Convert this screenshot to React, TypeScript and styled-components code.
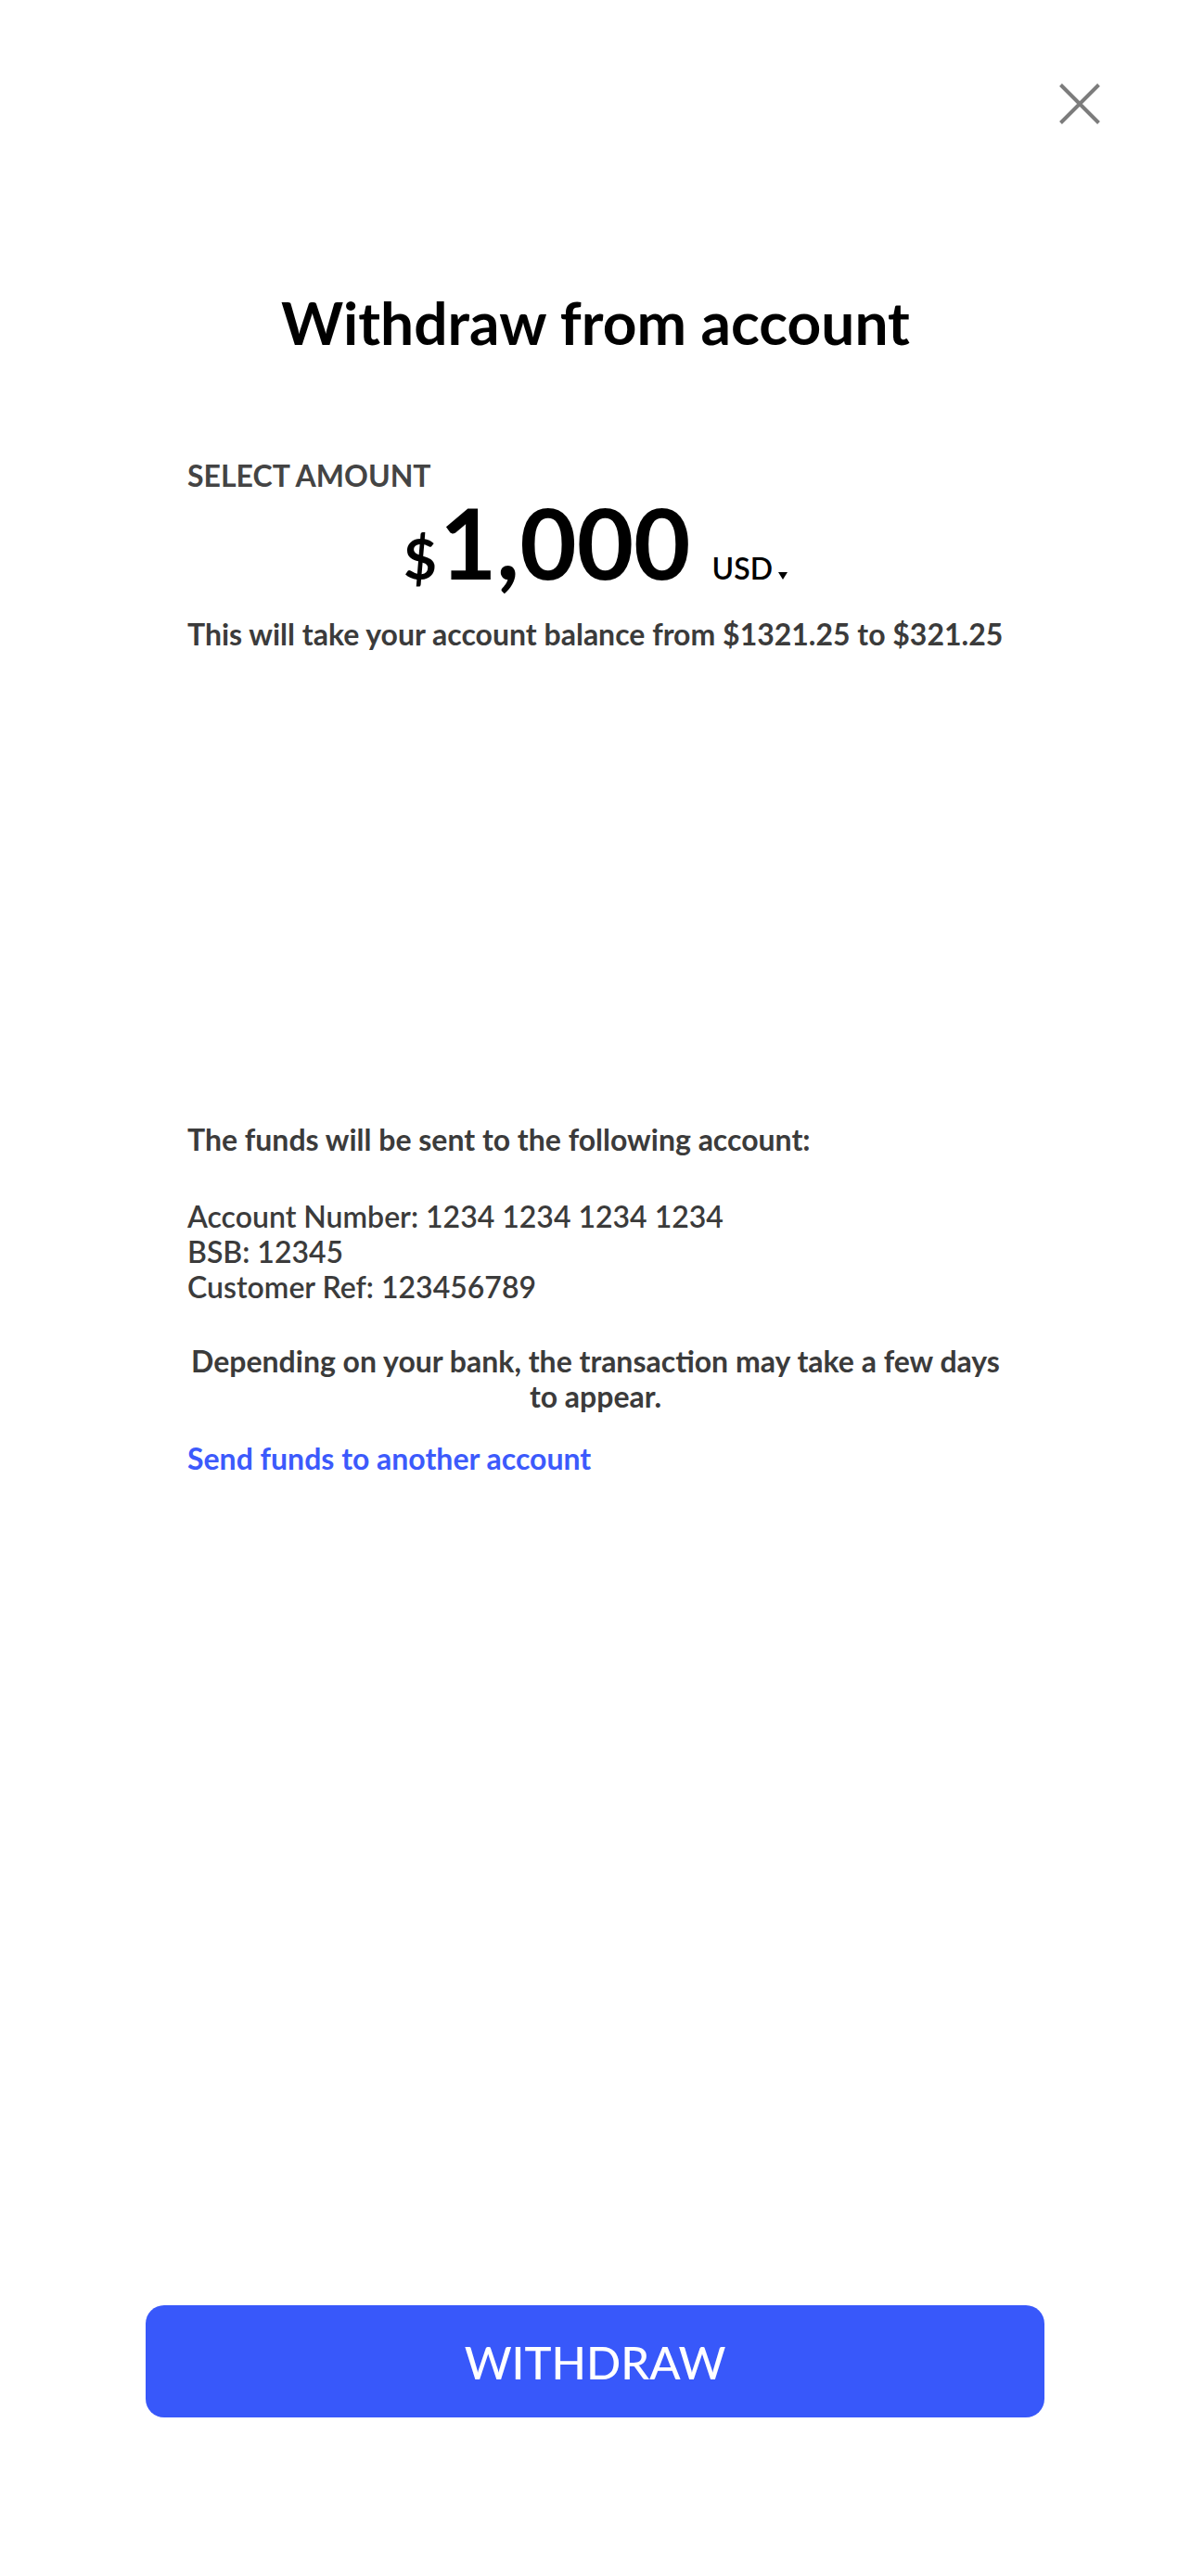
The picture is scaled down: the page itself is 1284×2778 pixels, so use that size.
import React from "react";
import styled, { createGlobalStyle } from "styled-components";

const GlobalStyle = createGlobalStyle`
  html, body {
    margin: 0;
    padding: 0;
    background: #ffffff;
  }
  body {
    font-family: Lato, "Open Sans", "Liberation Sans", sans-serif;
    -webkit-font-smoothing: antialiased;
  }
  * { box-sizing: border-box; }
`;

const Page = styled.div`
  min-height: 100vh;
  width: 100%;
  display: flex;
  flex-direction: column;
  background: #ffffff;
`;

const Header = styled.header`
  display: flex;
  justify-content: flex-end;
  padding: 90px 98px 0 0;
`;

const CloseButton = styled.button`
  width: 44px;
  height: 44px;
  padding: 0;
  border: none;
  background: none;
  cursor: pointer;
  display: block;
  svg { display: block; }
`;

const Content = styled.main`
  display: flex;
  flex-direction: column;
  padding: 0 202px;
`;

const Title = styled.h1`
  margin: 175px 0 0;
  text-align: center;
  font-size: 64px;
  line-height: 77px;
  font-weight: 700;
  color: #000000;
`;

const Label = styled.div`
  margin-top: 109px;
  font-size: 32px;
  line-height: 36px;
  font-weight: 700;
  color: #444444;
`;

const AmountRow = styled.div`
  display: flex;
  justify-content: center;
  align-items: baseline;
`;

const Currency = styled.span`
  font-size: 62px;
  line-height: 62px;
  font-weight: 700;
  color: #000000;
  margin-right: 3px;
`;

const Amount = styled.span`
  font-size: 106px;
  line-height: 106px;
  font-weight: 700;
  color: #000000;
`;

const CurrencyPicker = styled.button`
  margin-left: 23px;
  padding: 0;
  border: none;
  background: none;
  font-family: inherit;
  font-size: 32px;
  line-height: 36px;
  font-weight: 600;
  color: #000000;
  display: inline-flex;
  align-items: baseline;
  cursor: pointer;
`;

const Caret = styled.span`
  display: inline-block;
  width: 0;
  height: 0;
  margin-left: 6px;
  margin-bottom: 2px;
  border-left: 5px solid transparent;
  border-right: 5px solid transparent;
  border-top: 8px solid #000000;
`;

const Text = styled.p<{ $top?: number; $center?: boolean; $weight?: number; $lh?: number }>`
  margin: ${(p) => p.$top ?? 0}px 0 0;
  font-size: 32px;
  line-height: ${(p) => p.$lh ?? 36}px;
  font-weight: ${(p) => p.$weight ?? 700};
  color: #3b3b3b;
  text-align: ${(p) => (p.$center ? "center" : "left")};
`;

const Details = styled.div`
  margin-top: 46px;
  display: flex;
  flex-direction: column;
`;

const DetailLine = styled.div`
  font-size: 32px;
  line-height: 38px;
  font-weight: 600;
  color: #3b3b3b;
`;

const Link = styled.a`
  margin-top: 30px;
  align-self: flex-start;
  font-size: 32px;
  line-height: 36px;
  font-weight: 700;
  color: #3c5afc;
  text-decoration: none;
  cursor: pointer;
`;

const Footer = styled.footer`
  margin-top: auto;
  display: flex;
  justify-content: center;
  padding: 0 0 171px;
`;

const WithdrawButton = styled.button`
  width: 969px;
  height: 121px;
  border: none;
  border-radius: 20px;
  background: #3858fa;
  color: #ffffff;
  font-family: inherit;
  font-size: 49px;
  font-weight: 500;
  cursor: pointer;
  margin-left: -1px;
`;

export default function App() {
  return (
    <>
      <GlobalStyle />
      <Page>
        <Header>
          <CloseButton aria-label="Close">
            <svg width="44" height="44" viewBox="0 0 44 44">
              <path d="M1.5 1.5 L42.5 42.5 M42.5 1.5 L1.5 42.5" stroke="#7c7c7c" strokeWidth="4" fill="none" />
            </svg>
          </CloseButton>
        </Header>
        <Content>
          <Title>Withdraw from account</Title>
          <Label>SELECT AMOUNT</Label>
          <AmountRow>
            <Currency>$</Currency>
            <Amount>1,000</Amount>
            <CurrencyPicker>
              USD
              <Caret />
            </CurrencyPicker>
          </AmountRow>
          <Text $top={29}>This will take your account balance from $1321.25 to $321.25</Text>
          <Text $top={509}>The funds will be sent to the following account:</Text>
          <Details>
            <DetailLine>Account Number: 1234 1234 1234 1234</DetailLine>
            <DetailLine>BSB: 12345</DetailLine>
            <DetailLine>Customer Ref: 123456789</DetailLine>
          </Details>
          <Text $top={42} $center $lh={38}>
            Depending on your bank, the transaction may take a few days to appear.
          </Text>
          <Link>Send funds to another account</Link>
        </Content>
        <Footer>
          <WithdrawButton>WITHDRAW</WithdrawButton>
        </Footer>
      </Page>
    </>
  );
}
